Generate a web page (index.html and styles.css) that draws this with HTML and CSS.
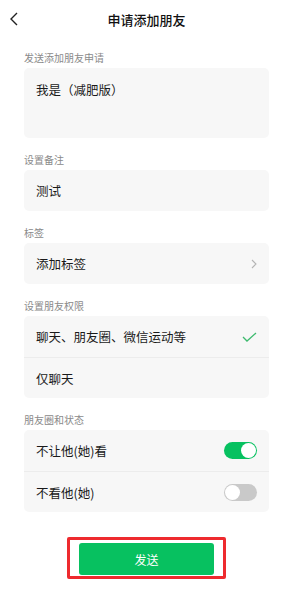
FILE: index.html
```html
<!DOCTYPE html>
<html lang="zh-CN">
<head>
    <meta charset="UTF-8">
    <meta name="viewport" content="width=device-width, initial-scale=1.0">
    <title>申请添加朋友</title>
    <link rel="stylesheet" href="styles.css">
</head>
<body>
    <div class="header">
        <svg class="back" width="8" height="14" viewBox="0 0 8 14">
            <polyline points="7,1 1,7 7,13" fill="none" stroke="#222" stroke-width="1.4" stroke-linejoin="miter"/>
        </svg>
        <div class="title">申请添加朋友</div>
    </div>

    <div class="content">
        <div class="section">
            <div class="label">发送添加朋友申请</div>
            <div class="card message">我是（减肥版）</div>
        </div>

        <div class="section">
            <div class="label">设置备注</div>
            <div class="card">
                <div class="row">测试</div>
            </div>
        </div>

        <div class="section">
            <div class="label">标签</div>
            <div class="card">
                <div class="row">
                    <span>添加标签</span>
                    <svg width="6" height="10" viewBox="0 0 6 10">
                        <polyline points="1,1 5,5 1,9" fill="none" stroke="#b4b4b4" stroke-width="1.1"/>
                    </svg>
                </div>
            </div>
        </div>

        <div class="section">
            <div class="label">设置朋友权限</div>
            <div class="card">
                <div class="row">
                    <span>聊天、朋友圈、微信运动等</span>
                    <svg width="15" height="10" viewBox="0 0 15 10">
                        <polyline points="1,5 5,9 14,1" fill="none" stroke="#3dba6e" stroke-width="1.3"/>
                    </svg>
                </div>
                <div class="row">仅聊天</div>
            </div>
        </div>

        <div class="section">
            <div class="label">朋友圈和状态</div>
            <div class="card">
                <div class="row">
                    <span>不让他(她)看</span>
                    <div class="switch on"><div class="knob"></div></div>
                </div>
                <div class="row">
                    <span>不看他(她)</span>
                    <div class="switch"><div class="knob"></div></div>
                </div>
            </div>
        </div>

        <div class="send-wrap">
            <div class="highlight">
                <button class="send">发送</button>
            </div>
        </div>
    </div>
</body>
</html>
```

FILE: styles.css
```css
* {
    box-sizing: border-box;
    margin: 0;
    padding: 0;
}

body {
    background: #fff;
    font-family: "Noto Sans CJK SC", "Noto Sans", sans-serif;
    color: #1a1a1a;
    width: 293px;
}

.header {
    position: relative;
    height: 38px;
    display: flex;
    align-items: center;
    justify-content: center;
}

.back {
    position: absolute;
    left: 10px;
    top: 12px;
}

.title {
    font-size: 13px;
    font-weight: 500;
    color: #111;
}

.content {
    padding: 13px 24px 0;
}

.section {
    margin-bottom: 15px;
}

.label {
    font-size: 10px;
    line-height: 14px;
    color: #8a8a8a;
    margin-bottom: 3px;
}

.card {
    background: #f7f7f7;
    border-radius: 5px;
    font-size: 12.5px;
}

.message {
    height: 70px;
    padding: 14px 12px 0;
    line-height: 16px;
}

.row {
    height: 41px;
    padding: 0 12px;
    display: flex;
    align-items: center;
    justify-content: space-between;
    border-top: 1px solid #ececec;
}

.row:first-child {
    border-top: none;
}

.switch {
    width: 33px;
    height: 17px;
    border-radius: 9px;
    background: #c9c9c9;
    padding: 1px;
    display: flex;
}

.switch.on {
    background: #07c160;
    justify-content: flex-end;
}

.knob {
    width: 15px;
    height: 15px;
    border-radius: 50%;
    background: #fff;
}

.send-wrap {
    display: flex;
    justify-content: center;
    padding-top: 10px;
}

.highlight {
    width: 159px;
    height: 42px;
    border: 3px solid #ee2a2e;
    border-radius: 2px;
    padding: 3px 9px 1px;
}

.send {
    width: 100%;
    height: 32px;
    border: none;
    border-radius: 3px;
    background: #07c160;
    color: #fff;
    font-family: inherit;
    font-size: 12px;
}
```
